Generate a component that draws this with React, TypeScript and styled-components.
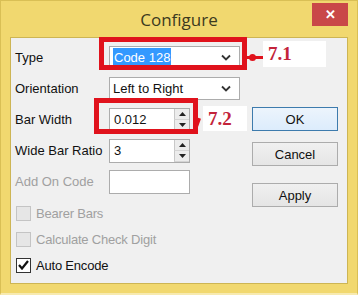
import styled, { createGlobalStyle } from 'styled-components'

const GlobalStyle = createGlobalStyle`
  html, body {
    margin: 0;
    padding: 0;
  }
  body {
    width: 358px;
    height: 295px;
    overflow: hidden;
    background: #f1d86f;
    font-family: "Liberation Sans", Arial, sans-serif;
  }
`

function Chevron() {
  return (
    <svg width="10" height="7" viewBox="0 0 10 7">
      <path d="M1 1.5 L5 5.5 L9 1.5" stroke="#333" strokeWidth="1.8" fill="none" />
    </svg>
  )
}

function Spinner() {
  return (
    <SpinBox>
      <SpinBtn>
        <svg width="7" height="4" viewBox="0 0 7 4">
          <path d="M0 4 L3.5 0 L7 4 Z" fill="#222" />
        </svg>
      </SpinBtn>
      <SpinBtn>
        <svg width="7" height="4" viewBox="0 0 7 4">
          <path d="M0 0 L3.5 4 L7 0 Z" fill="#222" />
        </svg>
      </SpinBtn>
    </SpinBox>
  )
}

export default function App() {
  return (
    <>
      <GlobalStyle />
      <Window>
        <TitleBar>
          <span />
          <Title>Configure</Title>
          <CloseButton>✕</CloseButton>
        </TitleBar>
        <Client>
          <Form>
            <Row>
              <Label>Type</Label>
              <Select>
                <Selected>Code 128</Selected>
                <Chevron />
              </Select>
            </Row>
            <Row>
              <Label>Orientation</Label>
              <Select>
                <span>Left to Right</span>
                <Chevron />
              </Select>
            </Row>
            <Row>
              <Label>Bar Width</Label>
              <SpinInput>
                <span>0.012</span>
                <Spinner />
              </SpinInput>
            </Row>
            <Row>
              <Label>Wide Bar Ratio</Label>
              <SpinInput>
                <span>3</span>
                <Spinner />
              </SpinInput>
            </Row>
            <Row>
              <Label disabled>Add On Code</Label>
              <TextInput />
            </Row>
            <Checks>
              <CheckRow disabled>
                <Box disabled />
                Bearer Bars
              </CheckRow>
              <CheckRow disabled>
                <Box disabled />
                Calculate Check Digit
              </CheckRow>
              <CheckRow>
                <Box>
                  <svg width="11" height="10" viewBox="0 0 11 10">
                    <path d="M1 5 L4 8.5 L10 1" stroke="#111" strokeWidth="2.2" fill="none" />
                  </svg>
                </Box>
                Auto Encode
              </CheckRow>
            </Checks>
          </Form>
          <Buttons>
            <Button $default>OK</Button>
            <Button>Cancel</Button>
            <Button $gap={17}>Apply</Button>
          </Buttons>

          <RedBox style={{ left: 88, top: -1, width: 148, height: 33 }} />
          <Connector style={{ left: 236, top: 18, width: 18 }} />
          <Dot style={{ left: 238, top: 16 }} />
          <Note style={{ left: 252, top: 3, width: 63, height: 26 }}>7.1</Note>

          <RedBox style={{ left: 83, top: 60, width: 104, height: 36 }} />
          <Slant />
          <Note style={{ left: 192, top: 68, width: 44, height: 25 }}>7.2</Note>
        </Client>
      </Window>
    </>
  )
}

const Window = styled.div`
  width: 358px;
  height: 295px;
  box-sizing: border-box;
  display: flex;
  flex-direction: column;
  background: #f1d86f;
  border: 1px solid #d9bf55;
  border-bottom: 2px solid #f7eab0;
  padding: 0 9px 9px 9px;
`

const TitleBar = styled.div`
  height: 36px;
  display: grid;
  grid-template-columns: 1fr auto 1fr;
  align-items: center;
`

const Title = styled.div`
  font-family: "Open Sans", "Liberation Sans", sans-serif;
  font-size: 17px;
  color: #3c3a1e;
  padding-top: 1px;
`

const CloseButton = styled.div`
  justify-self: end;
  align-self: start;
  margin-top: 2px;
  width: 36px;
  height: 23px;
  background: #c94848;
  color: #fff;
  font-size: 13px;
  font-weight: bold;
  display: flex;
  align-items: center;
  justify-content: center;
`

const Client = styled.div`
  position: relative;
  flex: 1;
  background: #f0f0f0;
  border: 1px solid #cdb554;
  display: grid;
  grid-template-columns: 1fr auto;
  font-size: 13px;
  color: #111;
`

const Form = styled.div`
  padding: 4px 0 0 4px;
  display: flex;
  flex-direction: column;
`

const Row = styled.div`
  height: 31px;
  display: flex;
  align-items: center;
`

const Label = styled.div<{ disabled?: boolean }>`
  width: 94px;
  color: ${p => (p.disabled ? '#a0a0a0' : '#111')};
`

const Select = styled.div`
  width: 131px;
  height: 23px;
  box-sizing: border-box;
  border: 1px solid #acacac;
  background: #fff;
  display: flex;
  align-items: center;
  justify-content: space-between;
  padding: 0 8px 0 3px;
`

const Selected = styled.span`
  background: #3399ff;
  color: #fff;
  padding: 2px 1px;
`

const SpinInput = styled.div`
  width: 81px;
  height: 24px;
  box-sizing: border-box;
  border: 1px solid #acacac;
  background: #fff;
  display: flex;
  align-items: center;
  justify-content: space-between;
  padding-left: 4px;
`

const SpinBox = styled.div`
  width: 15px;
  height: 100%;
  display: flex;
  flex-direction: column;
`

const SpinBtn = styled.div`
  flex: 1;
  background: #ececec;
  border-left: 1px solid #c8c8c8;
  border-bottom: 1px solid #d4d4d4;
  display: flex;
  align-items: center;
  justify-content: center;
`

const TextInput = styled.div`
  width: 81px;
  height: 24px;
  box-sizing: border-box;
  border: 1px solid #acacac;
  background: #fff;
`

const Checks = styled.div`
  margin-top: 3px;
  display: flex;
  flex-direction: column;
`

const CheckRow = styled.div<{ disabled?: boolean }>`
  height: 26px;
  display: flex;
  align-items: center;
  gap: 5px;
  padding-left: 1px;
  letter-spacing: -0.2px;
  color: ${p => (p.disabled ? '#a0a0a0' : '#111')};
`

const Box = styled.div<{ disabled?: boolean }>`
  width: 13px;
  height: 13px;
  border: 1px solid ${p => (p.disabled ? '#c4c4c4' : '#333')};
  background: ${p => (p.disabled ? '#e6e6e6' : '#fff')};
  display: flex;
  align-items: center;
  justify-content: center;
`

const Buttons = styled.div`
  padding: 69px 9px 0 0;
  display: flex;
  flex-direction: column;
  gap: 11px;
`

const Button = styled.div<{ $default?: boolean; $gap?: number }>`
  width: 86px;
  height: 24px;
  box-sizing: border-box;
  margin-top: ${p => (p.$gap ? p.$gap - 11 : 0)}px;
  border: 1px solid ${p => (p.$default ? '#3d7bad' : '#acacac')};
  background: ${p => (p.$default ? 'linear-gradient(#ecf4fc, #dcecfc)' : 'linear-gradient(#f0f0f0, #e5e5e5)')};
  display: flex;
  align-items: center;
  justify-content: center;
  color: #111;
`

const RedBox = styled.div`
  position: absolute;
  box-sizing: border-box;
  border: 5px solid #e0121c;
`

const Connector = styled.div`
  position: absolute;
  height: 3px;
  background: #e0121c;
`

const Dot = styled.div`
  position: absolute;
  width: 7px;
  height: 7px;
  border-radius: 50%;
  background: #e0121c;
`

const Slant = styled.div`
  position: absolute;
  left: 185px;
  top: 80px;
  width: 3px;
  height: 12px;
  background: #e0121c;
  transform: rotate(20deg);
`

const Note = styled.div`
  position: absolute;
  background: #fff;
  color: #c3233a;
  font-family: "Liberation Serif", serif;
  font-weight: bold;
  font-size: 19px;
  display: flex;
  align-items: center;
  padding-left: 5px;
  box-sizing: border-box;
`
